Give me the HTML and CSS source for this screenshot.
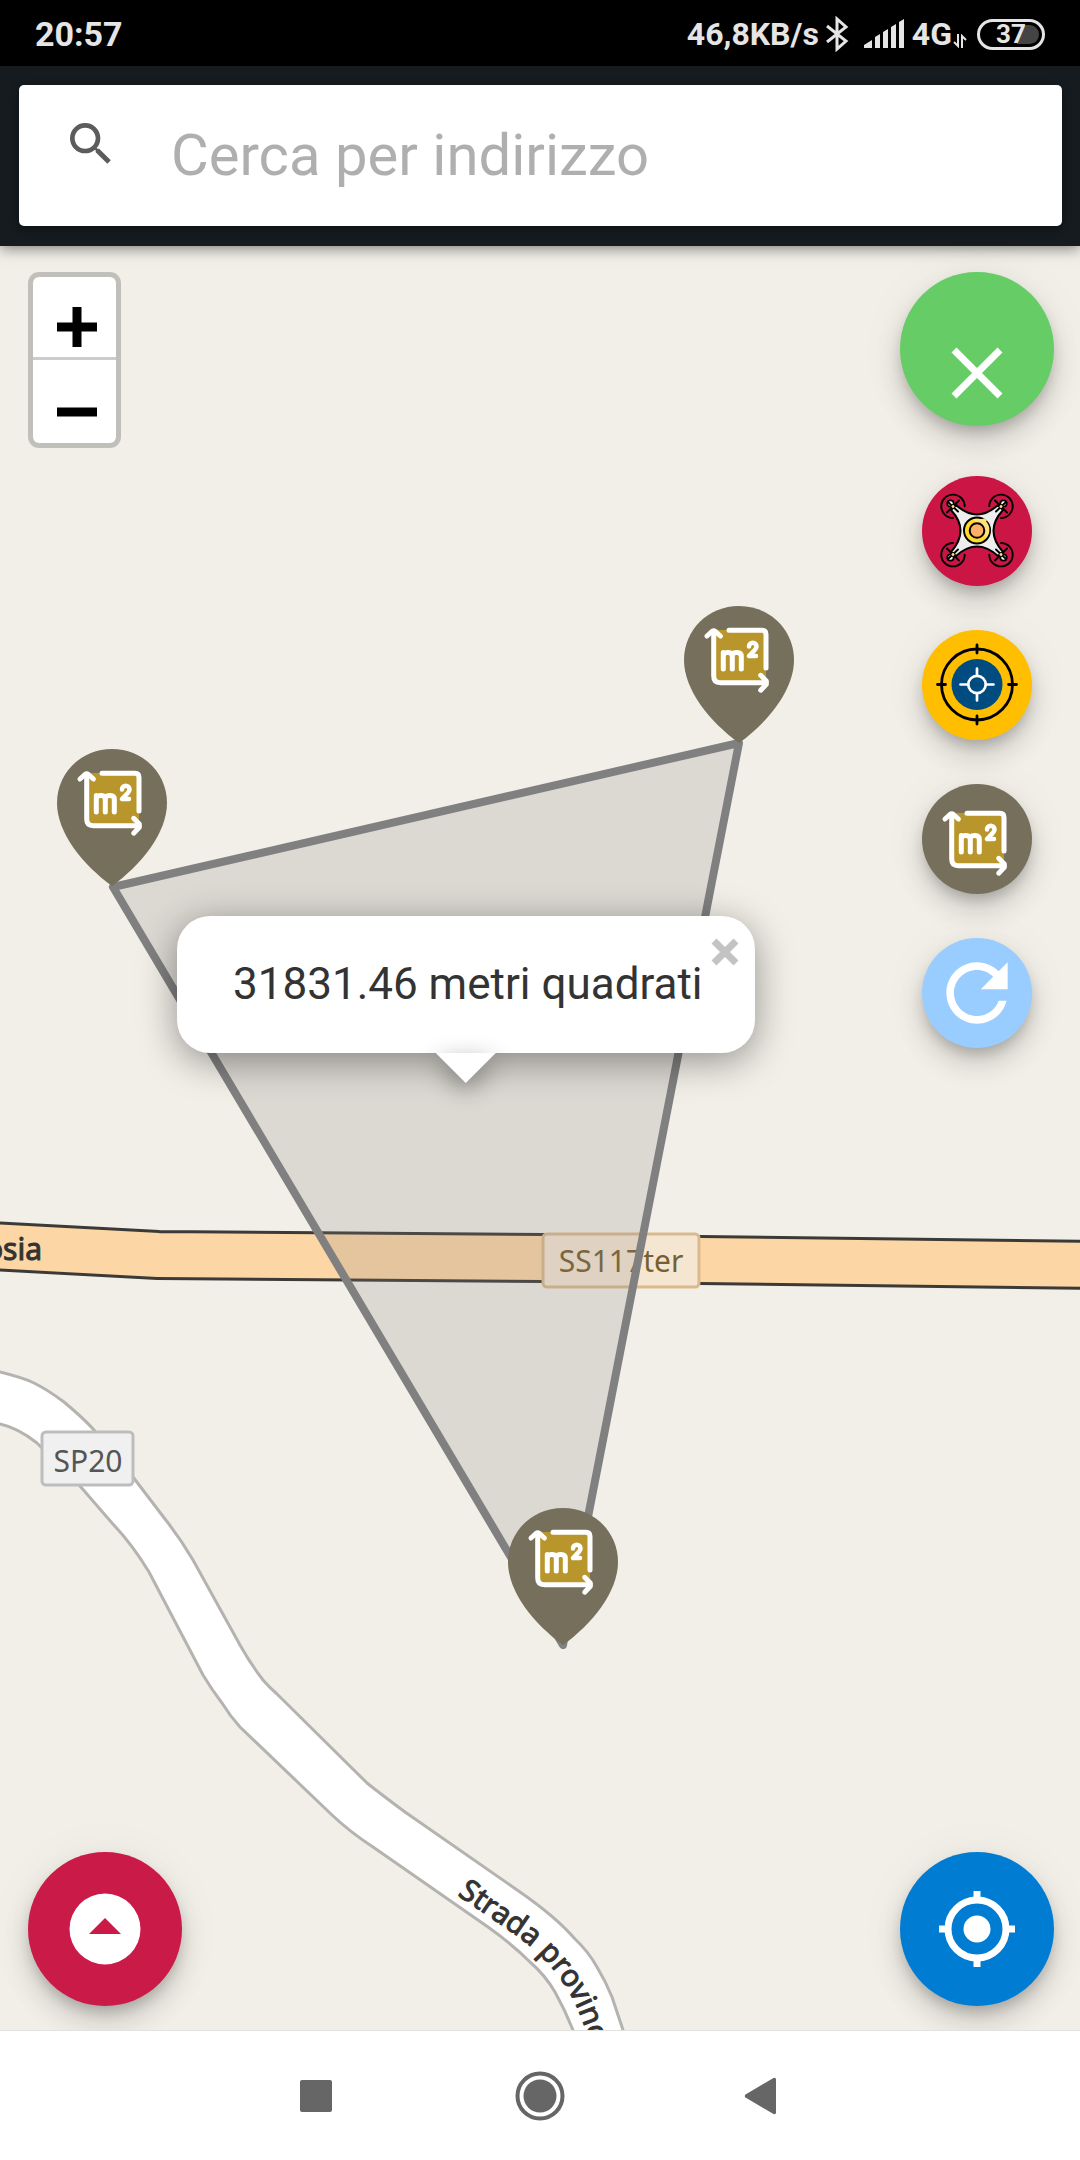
FILE: index.html
```html
<!DOCTYPE html>
<html lang="it">
<head>
<meta charset="utf-8">
<meta name="viewport" content="width=device-width, initial-scale=1">
<title>Mappa</title>
<link rel="stylesheet" href="styles.css">
</head>
<body>
<div class="status">
  <span class="clock">20:57</span>
  <div class="status-right">
    <span class="net">46,8KB/s</span>
    <svg class="bluetooth" width="24" height="36" viewBox="0 0 24 36" aria-hidden="true"><path d="M2 10 21 25 12 33V3l9 8L2 26" /></svg>
    <svg class="signal" width="42" height="30" viewBox="0 0 42 30" aria-hidden="true"><path d="M1 29v-3l8-5v8zM12 29V18l5-3v14zM20 29V13l5-3v19zM28 29V8l5-3v24zM36 29V3l5-3v29z"/></svg>
    <span class="net">4G</span>
    <svg class="arrows" width="14" height="14" viewBox="0 0 14 14" aria-hidden="true"><path d="M5 0v12L1 8M9 14V2l4 4"/></svg>
    <span class="battery">37</span>
  </div>
</div>

<header class="header">
  <form class="search">
    <svg class="search-icon" width="56" height="56" viewBox="0 0 24 24" aria-hidden="true"><path d="M15.5 14h-.79l-.28-.27A6.471 6.471 0 0 0 16 9.500 6.500 6.500 0 1 0 9.500 16c1.610 0 3.090-.59 4.230-1.570l.27.28v.79l5 4.990L20.490 19l-4.990-5zm-6 0C7.010 14 5 11.990 5 9.500S7.010 5 9.500 5 14 7.010 14 9.500 11.990 14 9.500 14z"/></svg>
    <input class="search-input" type="text" placeholder="Cerca per indirizzo" aria-label="Cerca per indirizzo">
  </form>
</header>

<main class="map">
  <svg class="canvas" viewBox="0 246 1080 1784" preserveAspectRatio="xMidYMid slice" role="img" aria-label="Mappa">
    <defs>
      <g id="area">
        <path fill="#b9962b" d="M32 29h50v53H32z"/>
        <g fill="none" stroke="#fff" stroke-width="5" stroke-linecap="round" stroke-linejoin="round">
          <path d="M45 29.300h33q4 0 4 4V67"/>
          <path d="M29.700 30v45q0 6.700 6.700 6.700H82"/>
          <path d="M23 35l5.500-5h2.400l5.500 5M76.700 74.300l5.600 5.700v3.200l-5.600 6"/>
          <path d="M39.300 68V51.500M39.300 55q0-3.500 4-3.500h1q4 0 4 4V68M48.300 55q0-3.500 4-3.500h1q4 0 4 4V68"/>
          <path stroke-width="4.500" d="M65 45.500c0-5 7.500-5 7.500 0 0 3-4.500 6-7.500 9.500h7"/>
        </g>
      </g>
      <g id="pin">
        <path fill="#766f5c" d="M55 0C24 0 0 24 0 54c0 30 26 62 55 83 29-21 55-53 55-83C110 24 86 0 55 0z"/>
        <use href="#area" y="-5"/>
      </g>
    </defs>

    <g class="secondary-road">
      <path d="M-20 1366 0 1372C12 1375 24 1378 34 1383 46 1389 56 1396 64 1402 76 1412 86 1421 94 1430L133 1477 165 1519Q180 1538 193 1560L240 1645Q250 1663 263 1680 269 1687 277 1694L367 1783Q382 1795 405 1812L520 1892Q556 1917 575 1939 588 1951 597 1967 606 1982 612 1997L623 2030 628 2050H578L573 2030Q565 2010 555 1992 545 1975 530 1962 512 1944 488 1927L373 1847Q350 1832 332 1815L240 1727Q230 1716 222 1703 212 1690 203 1675L149 1572Q132 1544 112 1523L80 1486 37 1443Q18 1428 0 1424L-20 1418z"/>
    </g>
    <g class="main-road">
      <path class="casing" d="M-10 1246 158 1255 544 1258 700 1260 1090 1265"/>
      <path class="fill" d="M-10 1246 158 1255 544 1258 700 1260 1090 1265"/>
    </g>

    <g class="labels">
      <path id="strada" fill="none" d="M457 1895 513 1933Q550 1959 569 1992T595 2070"/>
      <text class="road-name"><textPath href="#strada">Strada provinciale</textPath></text>
      <text class="road-name" x="42" y="1260" text-anchor="end">Nicosia</text>
      <rect x="543" y="1234" width="156" height="53" rx="4" fill="#f5e6d2" stroke="#dab98d" stroke-width="3"/>
      <text class="ref-main" x="621" y="1272" text-anchor="middle">SS117ter</text>
      <rect x="42" y="1432" width="91" height="53" rx="4" fill="#f0f0f0" stroke="#bdbdbd" stroke-width="3"/>
      <text class="ref-secondary" x="88" y="1472" text-anchor="middle">SP20</text>
    </g>

    <path class="polygon" d="M113 887 739 743 563 1645z"/>
    <use href="#pin" x="57" y="749"/>
    <use href="#pin" x="684" y="606"/>
    <use href="#pin" x="508" y="1508"/>
  </svg>

  <div class="popup" role="dialog" aria-label="Area">
    <p class="popup-text">31831.46 metri quadrati</p>
    <button class="popup-close" type="button" aria-label="Chiudi">
      <svg width="28" height="28" viewBox="0 0 28 28" aria-hidden="true"><path d="M3 3l22 22M25 3 3 25" stroke="#c3c3c3" stroke-width="7"/></svg>
    </button>
    <span class="popup-tip"></span>
  </div>

  <div class="overlay">
    <div class="zoom">
      <button type="button" aria-label="Ingrandisci"><svg width="40" height="40" viewBox="0 0 40 40" aria-hidden="true"><path d="M0 20h40M20 0v40"/></svg></button>
      <button type="button" aria-label="Riduci"><svg width="40" height="40" viewBox="0 0 40 40" aria-hidden="true"><path d="M0 20h40"/></svg></button>
    </div>

    <div class="tools">
      <button class="fab close" type="button" aria-label="Chiudi menu">
        <svg width="52" height="52" viewBox="0 0 52 52" aria-hidden="true"><path d="M3 3l46 46M49 3 3 49" stroke="#fff" stroke-width="7"/></svg>
      </button>
      <button class="fab small drone" type="button" aria-label="Drone">
        <svg width="110" height="110" viewBox="0 0 110 110" aria-hidden="true">
          <g fill="#fff" stroke="#000" stroke-width="1.800"><circle cx="28.500" cy="27.500" r="3.200"/><circle cx="81.500" cy="27.500" r="3.200"/><circle cx="28.500" cy="81.500" r="3.200"/><circle cx="81.500" cy="81.500" r="3.200"/></g>
          <path fill="#eee" stroke="#000" stroke-width="2" stroke-linejoin="round" d="M34 29Q55 48 76 29L81 34Q62 54.500 81 76L76 80Q55 61 34 80L29 76Q48 54.500 29 34z"/>
          <g fill="none" stroke="#000" stroke-width="1.900" stroke-linecap="round">
            <path d="M42.700 30.300A11.700 11.700 0 1 0 31 42M67.300 30.300A11.700 11.700 0 1 1 79 42M31 67A11.700 11.700 0 1 0 42.700 78.700M79 67A11.700 11.700 0 1 1 67.300 78.700"/>
            <path d="M25 36.500 37 24.500M26 26l10 9.500M73 24.500l12 12M84 26l-10 9.500M25 72.500l12 12M26 83l10-9.500M73 84.500l12-12M84 83l-10-9.500"/>
          </g>
          <g fill="#fd6" stroke="#000"><circle cx="31" cy="30.500" r="2"/><circle cx="79" cy="30.500" r="2"/><circle cx="31" cy="78.500" r="2"/><circle cx="79" cy="78.500" r="2"/></g>
          <circle cx="55" cy="54.500" r="13" fill="#ffda2b" stroke="#000" stroke-width="2"/>
          <path d="M61 43a12 12 0 0 1 3 19L51 43z" fill="#ffe27a"/>
          <path d="M61 43.200l3 2.300" stroke="#ffe27a" stroke-width="3"/>
          <circle cx="55" cy="54.500" r="7.300" fill="#ffb066" stroke="#000" stroke-width="2"/>
        </svg>
      </button>
      <button class="fab small target" type="button" aria-label="Mirino">
        <svg width="110" height="110" viewBox="0 0 110 110" fill="none" stroke-linecap="round" aria-hidden="true">
          <g stroke="#000" stroke-width="2.800"><circle cx="55" cy="54.500" r="35.500"/><path d="M55 15v8M55 86v8M15.500 54.500h8M86.500 54.500h8"/></g>
          <circle cx="55" cy="54.500" r="25.500" fill="#004b80"/>
          <g stroke="#fff" stroke-width="2.700"><circle cx="55" cy="54.500" r="8.700"/><path d="M55 38.500v7M55 63.500v7M38.500 54.500h7M64.500 54.500h7"/></g>
        </svg>
      </button>
      <button class="fab small measure" type="button" aria-label="Metri quadrati">
        <svg width="110" height="110" viewBox="0 0 110 110" aria-hidden="true"><use href="#area"/></svg>
      </button>
      <button class="fab small refresh" type="button" aria-label="Ricarica">
        <svg width="92" height="92" viewBox="0 0 24 24" aria-hidden="true"><path fill="#fff" d="M17.650 6.350C16.200 4.900 14.210 4 12 4c-4.420 0-7.990 3.580-7.990 8s3.570 8 7.990 8c3.730 0 6.840-2.550 7.730-6h-2.080c-.82 2.330-3.040 4-5.650 4-3.310 0-6-2.690-6-6s2.690-6 6-6c1.660 0 3.140.69 4.220 1.780L13 11h7V4l-2.350 2.350z"/></svg>
      </button>
    </div>

    <button class="fab menu" type="button" aria-label="Apri menu">
      <svg width="72" height="72" viewBox="0 0 72 72" aria-hidden="true"><circle cx="36" cy="36" r="35.500" fill="#fff"/><path fill="#c91a48" d="M36 25l16 16H20z"/></svg>
    </button>
    <button class="fab locate" type="button" aria-label="La mia posizione">
      <svg width="78" height="78" viewBox="0 0 78 78" aria-hidden="true"><circle cx="39" cy="39" r="13.500" fill="#fff"/><g fill="none" stroke="#fff" stroke-width="7"><circle cx="39" cy="39" r="29"/><path d="M39 1v9M39 68v9M1 39h9M68 39h9"/></g></svg>
    </button>
  </div>
</main>

<nav class="nav">
  <button type="button" aria-label="Recenti"><svg width="50" height="50" viewBox="0 0 50 50" aria-hidden="true"><rect x="9" y="9" width="32" height="32" rx="2"/></svg></button>
  <button type="button" aria-label="Home"><svg width="50" height="50" viewBox="0 0 50 50" aria-hidden="true"><circle cx="25" cy="25" r="22.500" fill="none" stroke="#666" stroke-width="4"/><circle cx="25" cy="25" r="16.500"/></svg></button>
  <button type="button" aria-label="Indietro"><svg width="50" height="50" viewBox="0 0 50 50" aria-hidden="true"><path d="M6.500 23.500 34.500 7q2.500-1 2.500 1.500v33q0 2.500-2.500 1.500L6.500 26.500q-1.500-1.500 0-3z"/></svg></button>
</nav>
</body>
</html>
```

FILE: styles.css
```css
* {
  box-sizing: border-box;
}

body {
  margin: 0;
  min-height: 100vh;
  display: flex;
  flex-direction: column;
  font-family: Roboto, "Liberation Sans", sans-serif;
  background: #fff;
}

button {
  display: flex;
  align-items: center;
  justify-content: center;
  padding: 0;
  border: 0;
  background: none;
}

svg {
  display: block;
  flex: none;
}

.status {
  display: flex;
  align-items: center;
  justify-content: space-between;
  height: 66px;
  padding: 2px 35px 0;
  background: #000;
  color: #e5e5e5;
  font-weight: 700;
}

.clock {
  font-size: 34px;
  line-height: 40px;
}

.status-right {
  display: flex;
  align-items: center;
}

.net {
  font-size: 32px;
  line-height: 40px;
}

.bluetooth {
  margin: 0 14px 0 6px;
  fill: none;
  stroke: #e5e5e5;
  stroke-width: 3;
}

.signal {
  margin-right: 7px;
  fill: #e5e5e5;
}

.arrows {
  margin: 14px 10px 0 1px;
  fill: none;
  stroke: #e5e5e5;
  stroke-width: 2;
}

.battery {
  width: 68px;
  height: 31px;
  border: 3px solid #e5e5e5;
  border-radius: 16px;
  background: linear-gradient(105deg, #000 63%, #444 63%) content-box;
  padding: 3px;
  font-size: 26px;
  line-height: 19px;
  text-align: center;
}

.header {
  position: relative;
  z-index: 1;
  padding: 19px 18px 20px 19px;
  background: #151b1f;
  box-shadow: 0 2px 14px rgba(0, 0, 0, 0.5);
}

.search {
  display: flex;
  align-items: flex-start;
  gap: 52px;
  height: 141px;
  padding-left: 44px;
  border-radius: 5px;
  background: #fff;
  box-shadow: 0 3px 8px rgba(0, 0, 0, 0.4);
}

.search-icon {
  margin-top: 31px;
  fill: #5c5c5c;
}

.search-input {
  flex: 1;
  align-self: stretch;
  min-width: 0;
  padding: 0 0 2px;
  border: 0;
  outline: 0;
  background: none;
  font-family: inherit;
  font-size: 58px;
  color: #333;
}

.search-input::placeholder {
  color: #afafaf;
  opacity: 1;
}

.map {
  position: relative;
  flex: 1;
  display: grid;
  min-height: 1200px;
  overflow: hidden;
  background: #f2efe8;
}

.canvas {
  position: absolute;
  inset: 0;
  width: 100%;
  height: 100%;
}

.secondary-road {
  fill: #fff;
  stroke: #b4b3b0;
  stroke-width: 3;
}

.main-road {
  fill: none;
}

.casing {
  stroke: #3c3a36;
  stroke-width: 50px;
}

.fill {
  stroke: #fcd6a4;
  stroke-width: 44px;
}

.labels {
  font-family: "Noto Sans", sans-serif;
  font-size: 30px;
  fill: #333;
}

.road-name {
  stroke: #333;
  stroke-width: 1px;
}

.ref-main {
  fill: #77602f;
}

.ref-secondary {
  fill: #555;
}

.polygon {
  fill: rgba(136, 128, 130, 0.2);
  stroke: #808080;
  stroke-width: 8px;
  stroke-linejoin: round;
}

.popup {
  position: absolute;
  left: 177px;
  top: 670px;
  padding: 40px 52px 40px 56px;
  border-radius: 33px;
  background: #fff;
  box-shadow: 0 8px 38px rgba(0, 0, 0, 0.4);
}

.popup-text {
  margin: 0;
  font-size: 44px;
  line-height: 57px;
  color: #333;
  white-space: nowrap;
}

.popup-close {
  position: absolute;
  top: 22px;
  right: 16px;
}

.popup-tip {
  position: absolute;
  left: 50%;
  top: 100%;
  width: 60px;
  height: 30px;
  transform: translateX(-50%);
  filter: drop-shadow(0 8px 12px rgba(0, 0, 0, 0.4));
}

.popup-tip::before {
  content: "";
  display: block;
  height: 100%;
  background: #fff;
  clip-path: polygon(0 0, 100% 0, 50% 100%);
}

.overlay {
  position: relative;
  display: grid;
  grid-template: 1fr auto / 1fr 1fr;
  padding: 26px 26px 24px 28px;
  pointer-events: none;
}

.overlay button {
  pointer-events: auto;
}

.zoom {
  align-self: start;
  justify-self: start;
  border: 5px solid rgba(0, 0, 0, 0.2);
  border-radius: 11px;
  background: #fff;
  background-clip: padding-box;
}

.zoom button {
  width: 83px;
  height: 83px;
  padding: 20px 0 0 5px;
  stroke: #000;
  stroke-width: 9;
}

.zoom button:first-child {
  border-bottom: 3px solid #ccc;
}

.tools {
  justify-self: end;
  display: flex;
  flex-direction: column;
  align-items: center;
  gap: 44px;
}

.fab {
  width: 154px;
  height: 154px;
  border-radius: 50%;
  box-shadow: 0 8px 14px -3px rgba(0, 0, 0, 0.2), 0 16px 28px rgba(0, 0, 0, 0.14), 0 3px 50px rgba(0, 0, 0, 0.05);
}

.small {
  width: 110px;
  height: 110px;
}

.close {
  margin-bottom: 6px;
  padding-top: 48px;
  background: #66cc66;
}

.drone {
  background: #cb1544;
}

.target {
  background: #ffbf00;
}

.measure {
  background: #766f5c;
}

.refresh {
  background: #99ccff;
}

.menu {
  background: #c91a48;
}

.locate {
  justify-self: end;
  background: #007dd3;
}

.nav {
  display: grid;
  grid-template-columns: repeat(3, 224px);
  justify-content: center;
  height: 130px;
  border-top: 1px solid #e0e2e2;
  background: #fff;
  fill: #666;
}
```
